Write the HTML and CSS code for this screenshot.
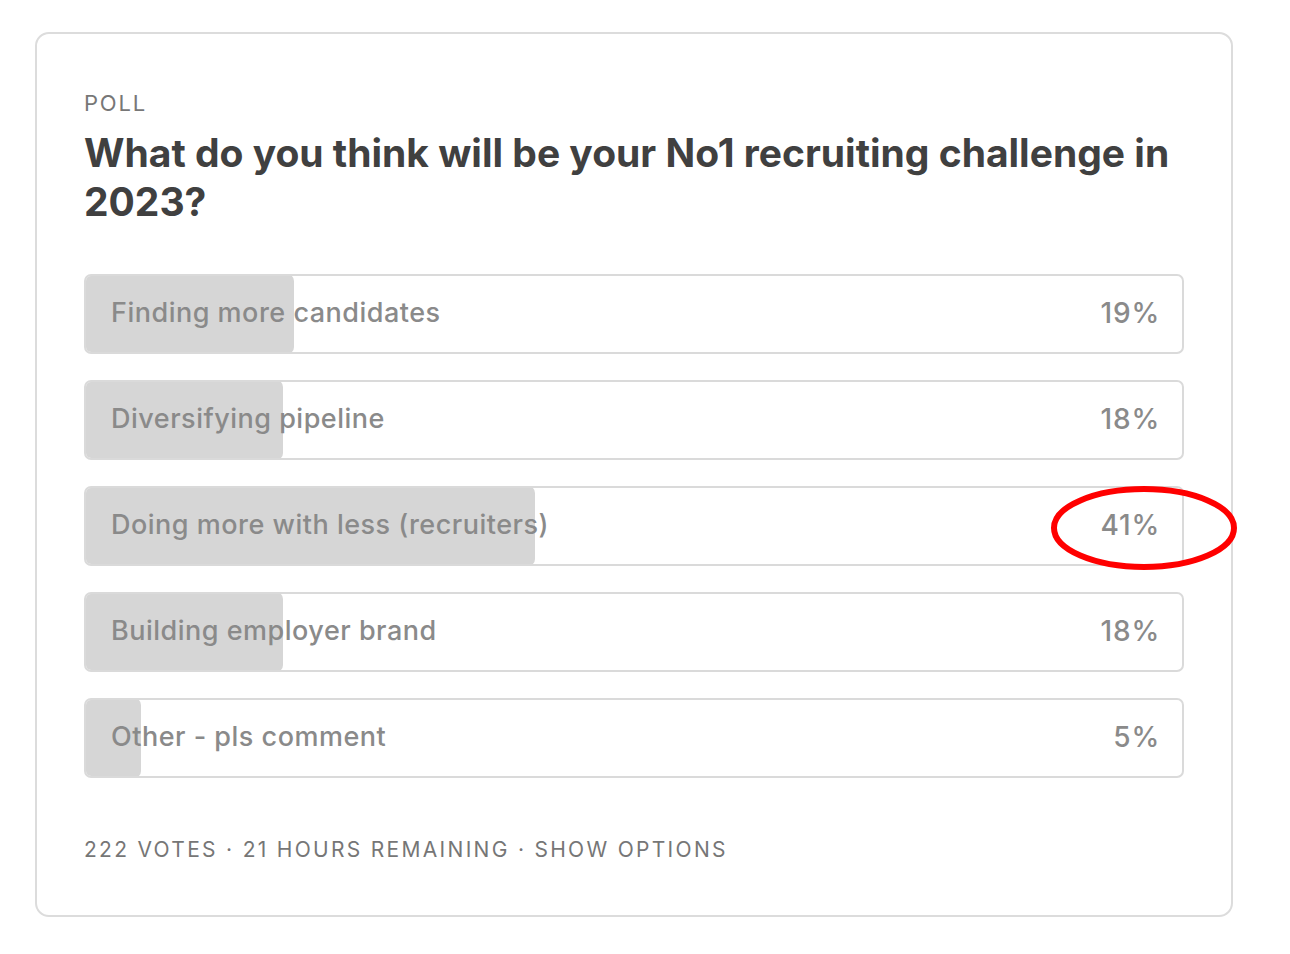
FILE: index.html
```html
<!DOCTYPE html>
<html>
<head>
<meta charset="utf-8">
<link rel="stylesheet" href="styles.css">
</head>
<body>
<div class="card">
  <div class="label">POLL</div>
  <h1 class="title">What do you think will be your No1 recruiting challenge in 2023?</h1>
  <div class="options">
    <div class="option"><div class="fill" style="--p:19%"></div><span class="text">Finding more candidates</span><span class="pct">19%</span></div>
    <div class="option"><div class="fill" style="--p:18%"></div><span class="text">Diversifying pipeline</span><span class="pct">18%</span></div>
    <div class="option"><div class="fill" style="--p:41%"></div><span class="text">Doing more with less (recruiters)</span><span class="pct">41%</span></div>
    <div class="option"><div class="fill" style="--p:18%"></div><span class="text">Building employer brand</span><span class="pct">18%</span></div>
    <div class="option"><div class="fill" style="--p:5%"></div><span class="text">Other - pls comment</span><span class="pct">5%</span></div>
  </div>
  <div class="footer">222 VOTES · 21 HOURS REMAINING · SHOW OPTIONS</div>
  <svg class="circle" width="194" height="92" viewBox="0 0 194 92"><ellipse cx="97" cy="46" rx="90" ry="39" fill="none" stroke="#ff0000" stroke-width="6"/></svg>
</div>
</body>
</html>
```

FILE: styles.css
```css
html, body {
  margin: 0;
  padding: 0;
  background: #ffffff;
}
body {
  font-family: Inter, "Noto Sans", "Liberation Sans", sans-serif;
  padding: 32px 0 0 35px;
}
.card {
  position: relative;
  box-sizing: border-box;
  width: 1198px;
  border: 2px solid #dcdcdc;
  border-radius: 14px;
  padding: 56px 47px 52px 47px;
}
.label {
  font-size: 22px;
  line-height: 26px;
  color: #777777;
  letter-spacing: 1.8px;
}
.title {
  margin: 12px 0 0 0;
  font-size: 39px;
  line-height: 49px;
  font-weight: 700;
  color: #404040;
  letter-spacing: 0px;
}
.options {
  margin-top: 48px;
  display: flex;
  flex-direction: column;
  gap: 26px;
}
.option {
  position: relative;
  box-sizing: border-box;
  height: 80px;
  border: 2px solid #dadada;
  border-radius: 7px;
  display: flex;
  align-items: center;
  justify-content: space-between;
  padding: 0 25px;
  overflow: hidden;
}
.fill {
  position: absolute;
  left: -2px;
  top: -2px;
  bottom: -2px;
  width: calc(var(--p) + 2px);
  background: #d6d6d6;
  border-radius: 7px;
}
.text, .pct {
  position: relative;
  font-size: 27px;
  font-weight: 500;
  color: #8a8a8a;
  letter-spacing: 0.5px;
  margin-top: -3px;
}
.pct {
  font-size: 28px;
  letter-spacing: 0.8px;
  margin-right: -3px;
}
.footer {
  margin-top: 59px;
  font-size: 21px;
  line-height: 26px;
  color: #767676;
  letter-spacing: 2.3px;
}
.circle {
  position: absolute;
  left: 1010px;
  top: 448px;
}
```
